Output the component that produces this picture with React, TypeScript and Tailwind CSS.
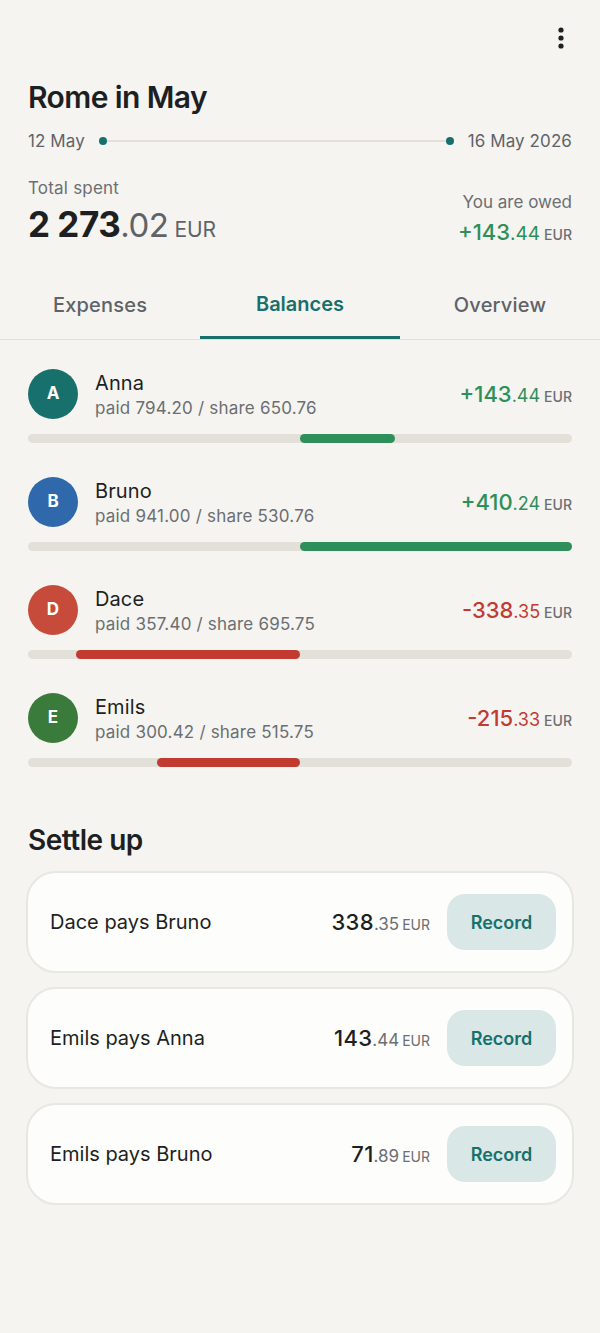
import React from "react";

const body = { fontFamily: "Inter, 'Open Sans', sans-serif" };
const head = { fontFamily: "Inter, 'Open Sans', sans-serif" };

type Person = {
  name: string;
  initial: string;
  color: string;
  paid: string;
  share: string;
  sign: string;
  whole: string;
  cents: string;
  value: number;
};

const people: Person[] = [
  { name: "Anna", initial: "A", color: "bg-[#17706b]", paid: "794.20", share: "650.76", sign: "+", whole: "143", cents: ".44", value: 143.44 },
  { name: "Bruno", initial: "B", color: "bg-[#2f69ab]", paid: "941.00", share: "530.76", sign: "+", whole: "410", cents: ".24", value: 410.24 },
  { name: "Dace", initial: "D", color: "bg-[#c74b3b]", paid: "357.40", share: "695.75", sign: "-", whole: "338", cents: ".35", value: -338.35 },
  { name: "Emils", initial: "E", color: "bg-[#3a7a3a]", paid: "300.42", share: "515.75", sign: "-", whole: "215", cents: ".33", value: -215.33 },
];

const settles = [
  { text: "Dace pays Bruno", whole: "338", cents: ".35" },
  { text: "Emils pays Anna", whole: "143", cents: ".44" },
  { text: "Emils pays Bruno", whole: "71", cents: ".89" },
];

const MAX = 410.24;

function Row({ p, first }: { p: Person; first: boolean }) {
  const pos = p.value >= 0;
  const pct = (Math.abs(p.value) / MAX) * 50;
  return (
    <div className={first ? "" : "mt-[34px]"}>
      <div className="flex items-center">
        <div
          className={`w-[50px] h-[50px] rounded-full ${p.color} flex items-center justify-center text-white text-[17px] font-bold`}
          style={body}
        >
          {p.initial}
        </div>
        <div className="ml-[17px] flex-1">
          <div className="text-[20px] leading-[26px] tracking-[0.1px] text-[#1d1f22]" style={body}>
            {p.name}
          </div>
          <div className="text-[17px] leading-[22px] tracking-[0.2px] text-[#6b6e72] mt-[1px]" style={body}>
            paid {p.paid} / share {p.share}
          </div>
        </div>
        <div className={`flex items-baseline ${pos ? "text-[#2e8f5a]" : "text-[#c23b31]"}`} style={body}>
          <span className="text-[22px] font-medium">
            {p.sign}
            {p.whole}
          </span>
          <span className="text-[18px]">{p.cents}</span>
          <span className="text-[14px] text-[#6b6e72] ml-[4px] font-medium">EUR</span>
        </div>
      </div>
      <div className="mt-[15px] h-[9px] rounded-full bg-[#e3e0d9] relative">
        <div
          className={`absolute top-0 h-[9px] rounded-full ${pos ? "bg-[#2e8f5a]" : "bg-[#c23b31]"}`}
          style={pos ? { left: "50%", width: `${pct}%` } : { right: "50%", width: `${pct}%` }}
        />
      </div>
    </div>
  );
}

export default function App() {
  return (
    <div className="min-h-[1333px] bg-[#f5f4f0] text-[#1d1f22]">
      <div className="flex justify-end pt-[26px] pr-[27px]">
        <svg width="24" height="24" viewBox="0 0 24 24">
          <circle cx="12" cy="4" r="2.6" fill="#1d1f22" />
          <circle cx="12" cy="12" r="2.6" fill="#1d1f22" />
          <circle cx="12" cy="20" r="2.6" fill="#1d1f22" />
        </svg>
      </div>

      <div className="px-[28px]">
        <h1 className="mt-[29px] text-[30px] leading-[36px] font-semibold tracking-[-0.6px] text-[#1d1f22]" style={head}>
          Rome in May
        </h1>

        <div className="mt-[14px] flex items-center text-[17px] leading-[24px] tracking-[0.1px] text-[#5f6368]" style={body}>
          <span>12 May</span>
          <div className="flex-1 flex items-center mx-[14px]">
            <span className="w-[8px] h-[8px] rounded-full bg-[#17706b]" />
            <span className="flex-1 h-[2px] bg-[#e3e0d9]" />
            <span className="w-[8px] h-[8px] rounded-full bg-[#17706b]" />
          </div>
          <span>16 May 2026</span>
        </div>

        <div className="mt-[23px] flex justify-between items-end">
          <div>
            <div className="text-[17px] leading-[24px] tracking-[0.2px] text-[#6b6e72]" style={body}>
              Total spent
            </div>
            <div className="mt-[4px] flex items-baseline leading-[40px]" style={body}>
              <span className="text-[35px] font-bold tracking-[-0.5px] text-[#1d1f22]">2 273</span>
              <span className="text-[33px] tracking-[-0.5px] text-[#5f6368]">.02</span>
              <span className="text-[21px] text-[#5f6368] ml-[6px]">EUR</span>
            </div>
          </div>
          <div className="text-right mb-[1px]">
            <div className="text-[17px] leading-[24px] text-[#6b6e72]" style={body}>
              You are owed
            </div>
            <div className="mt-[4px] flex items-baseline justify-end text-[#2e8f5a] leading-[28px]" style={body}>
              <span className="text-[22px] font-medium">+143</span>
              <span className="text-[19px]">.44</span>
              <span className="text-[14px] text-[#6b6e72] ml-[4px] font-medium">EUR</span>
            </div>
          </div>
        </div>
      </div>

      <div className="mt-[21px] flex border-b border-[#e2dfd8]" style={body}>
        <div className="flex-1 h-[68px] flex items-center justify-center text-[20px] tracking-[0.2px] text-[#5f6368] font-medium">
          Expenses
        </div>
        <div className="flex-1 h-[68px] flex items-center justify-center text-[20px] text-[#17706b] font-semibold border-b-[3px] border-[#17706b] -mb-px">
          Balances
        </div>
        <div className="flex-1 h-[68px] flex items-center justify-center text-[20px] tracking-[0.2px] text-[#5f6368] font-medium">
          Overview
        </div>
      </div>

      <div className="px-[28px] pt-[29px]">
        {people.map((p, i) => (
          <Row key={p.name} p={p} first={i === 0} />
        ))}
      </div>

      <div className="px-[26px]">
        <h2 className="mt-[55px] ml-[2px] text-[28px] leading-[36px] font-semibold tracking-[-0.5px] text-[#1d1f22]" style={head}>
          Settle up
        </h2>
        <div className="mt-[13px] flex flex-col gap-[14px]">
          {settles.map((s) => (
            <div
              key={s.text}
              className="h-[102px] rounded-[30px] bg-[#fdfdfb] border-2 border-[#e8e7e1] flex items-center pl-[22px] pr-[16px]"
            >
              <span className="flex-1 text-[20px] text-[#1d1f22]" style={head}>
                {s.text}
              </span>
              <div className="flex items-baseline" style={body}>
                <span className="text-[22px] font-medium tracking-[0.3px] text-[#1d1f22]">{s.whole}</span>
                <span className="text-[17px] text-[#6b6e72]">{s.cents}</span>
                <span className="text-[14px] text-[#6b6e72] ml-[3px]">EUR</span>
              </div>
              <div
                className="ml-[17px] w-[109px] h-[56px] rounded-[18px] bg-[#d9e7e6] flex items-center justify-center text-[18px] font-semibold text-[#17706b]"
                style={head}
              >
                Record
              </div>
            </div>
          ))}
        </div>
      </div>
    </div>
  );
}
